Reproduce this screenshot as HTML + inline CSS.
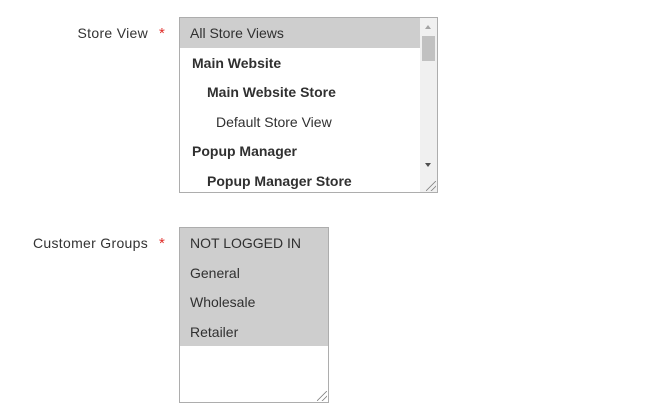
<!DOCTYPE html>
<html><head><style>
body{margin:0;width:648px;height:414px;background:#fff;font-family:"Liberation Sans",sans-serif;font-size:14px;color:#333;position:relative;overflow:hidden}
.lbl{position:absolute;right:500px;text-align:right;white-space:nowrap;letter-spacing:0.3px}
.ast{position:absolute;left:159px;color:#e02b27;font-size:15px}
.box{position:absolute;border:1px solid #adadad;background:#fff;overflow:hidden;box-sizing:border-box}
.opt{height:29.6px;line-height:30px;padding-left:10px;white-space:nowrap;color:#303030}
.sel{background:#cecece}
.b{font-weight:bold}
.sb{position:absolute;right:0;top:0;width:17px;height:100%;background:#f0f0f0}
.th{position:absolute;left:2px;top:18px;width:13px;height:25px;background:#c1c1c1}
.grip{position:absolute;right:1px;bottom:1px;width:10px;height:10px;background:linear-gradient(135deg,transparent 45%,#888 46%,#888 52%,transparent 53%,transparent 72%,#888 73%,#888 79%,transparent 80%)}
</style></head><body>
<div class="lbl" style="top:25px">Store View</div><div class="ast" style="top:25px">*</div>
<div class="box" style="left:179px;top:17px;width:259px;height:176px">
<div class="opt sel" style="margin-right:17px">All Store Views</div>
<div class="opt b" style="padding-left:12px">Main Website</div>
<div class="opt b" style="padding-left:27px">Main Website Store</div>
<div class="opt" style="padding-left:36px">Default Store View</div>
<div class="opt b" style="padding-left:12px">Popup Manager</div>
<div class="opt b" style="padding-left:27px">Popup Manager Store</div>
<div class="sb"><div style="position:absolute;left:5px;top:7px;border:3.5px solid transparent;border-bottom:4px solid #a3a3a3;border-top:0"></div><div class="th"></div><div style="position:absolute;left:5px;top:145px;border:3.5px solid transparent;border-top:4px solid #505050;border-bottom:0"></div></div>
<div class="grip"></div>
</div>
<div class="lbl" style="top:235px">Customer Groups</div><div class="ast" style="top:235px">*</div>
<div class="box" style="left:179px;top:227px;width:150px;height:176px">
<div class="opt sel">NOT LOGGED IN</div>
<div class="opt sel">General</div>
<div class="opt sel">Wholesale</div>
<div class="opt sel">Retailer</div>
<div class="grip"></div>
</div>
</body></html>
